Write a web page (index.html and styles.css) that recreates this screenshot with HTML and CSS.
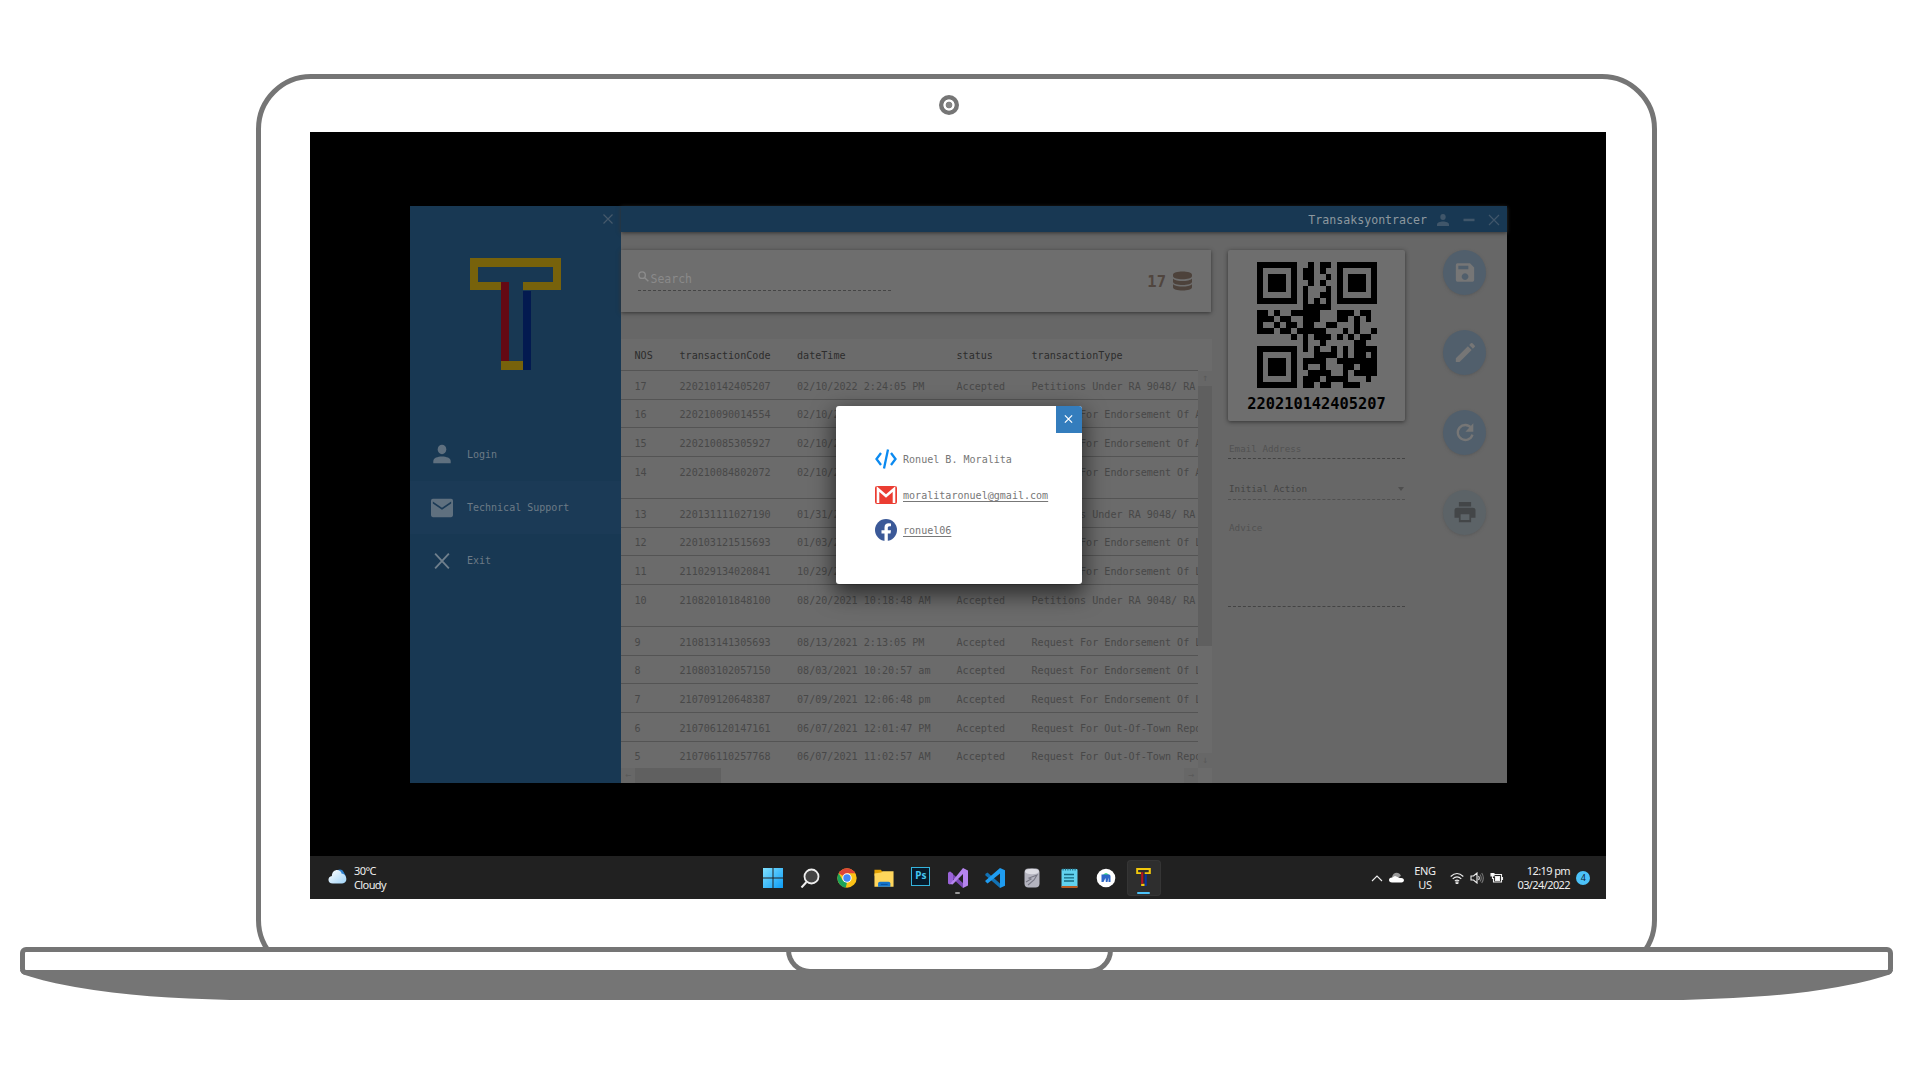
FILE: index.html
```html
<!DOCTYPE html>
<html lang="en">
<head>
<meta charset="utf-8">
<title>Transaksyontracer</title>
<link rel="stylesheet" href="styles.css">
</head>
<body>
<div class="laptop">
  <div class="lid">
    <div class="camera"></div>
    <div class="screen">
      <div class="desktop">
        <div class="app">
          <aside class="sidebar">
            <svg class="side-close" viewBox="0 0 10 10"><path d="M.5.5l9 9M9.5.5l-9 9"/></svg>
            <svg class="logo" viewBox="0 0 91 112">
              <path fill="#77620b" fill-rule="evenodd" d="M0 0h91v32H53v-8h30V9H8v15h23v8H0zM31 103h22v9H31z"/>
              <path fill="#640914" d="M31 24h8v79h-8z"/><path fill="#031a50" d="M53 33h8v79h-8z"/>
            </svg>
            <nav class="menu">
              <a class="menu-item"><svg viewBox="0 0 24 24"><ellipse cx="12" cy="7" rx="4.7" ry="5.2"/><path d="M2.5 22v-2.5c0-6.5 19-6.5 19 0V22z"/></svg>Login</a>
              <a class="menu-item active"><svg viewBox="0 0 24 24"><path fill-rule="evenodd" d="M2 2h20q2 0 2 2v16q0 2-2 2H2q-2 0-2-2V4q0-2 2-2zm0 3v2l10 7 10-7V5l-10 6.6z"/></svg>Technical Support</a>
              <a class="menu-item"><svg viewBox="0 0 24 24"><path class="stroke" d="M4.500 4l15 16M19.500 4l-15 16"/></svg>Exit</a>
            </nav>
          </aside>
          <section class="main">
            <header class="titlebar">
              <span>Transaksyontracer</span>
              <svg viewBox="0 0 12 12"><ellipse cx="6" cy="3" rx="2.700" ry="3"/><path d="M0 12v-1.500c0-4 12-4 12 0V12z"/></svg>
              <svg viewBox="0 0 12 12"><path d="M.5 4.700h11v2.500H.5z"/></svg>
              <svg viewBox="0 0 12 12"><path class="thin" d="M1 1l10 10M11 1L1 11"/></svg>
            </header>
            <div class="content">
              <div class="left">
                <div class="search-card">
                  <div class="search"><svg viewBox="0 0 12 12"><circle cx="4.500" cy="4.500" r="3.500"/><path d="M7 7l4.300 4.300"/></svg><span>Search</span></div>
                  <div class="count">17<svg viewBox="0 0 20 20"><path d="M0 3.500C0-1 20-1 20 3.500v1.300c0 4.500-20 4.500-20 0zM0 7.500c3 3.200 17 3.200 20 0v3.300c0 4.500-20 4.500-20 0zM0 13.500c3 3.200 17 3.200 20 0v3c0 4.500-20 4.500-20 0z"/></svg></div>
                </div>
                <div class="table">
                  <div class="row head"><span>NOS</span><span>transactionCode</span><span>dateTime</span><span>status</span><span>transactionType</span></div>
                  <div class="body">
                    <div class="rows">
                      <div class="row"><span>17</span><span>220210142405207</span><span>02/10/2022 2:24:05 PM</span><span>Accepted</span><span>Petitions Under RA 9048/ RA</span></div>
                      <div class="row"><span>16</span><span>220210090014554</span><span>02/10/2022 9:00:14 AM</span><span>Accepted</span><span>Request For Endorsement Of A</span></div>
                      <div class="row"><span>15</span><span>220210085305927</span><span>02/10/2022 8:53:05 AM</span><span>Accepted</span><span>Request For Endorsement Of A</span></div>
                      <div class="row tall"><span>14</span><span>220210084802072</span><span>02/10/2022 8:48:02 AM</span><span>Accepted</span><span>Request For Endorsement Of A</span></div>
                      <div class="row"><span>13</span><span>220131111027190</span><span>01/31/2022 11:10:27 AM</span><span>Accepted</span><span>Petitions Under RA 9048/ RA</span></div>
                      <div class="row"><span>12</span><span>220103121515693</span><span>01/03/2022 12:15:15 PM</span><span>Accepted</span><span>Request For Endorsement Of L</span></div>
                      <div class="row"><span>11</span><span>211029134020841</span><span>10/29/2021 1:40:20 PM</span><span>Accepted</span><span>Request For Endorsement Of L</span></div>
                      <div class="row tall"><span>10</span><span>210820101848100</span><span>08/20/2021 10:18:48 AM</span><span>Accepted</span><span>Petitions Under RA 9048/ RA</span></div>
                      <div class="row"><span>9</span><span>210813141305693</span><span>08/13/2021 2:13:05 PM</span><span>Accepted</span><span>Request For Endorsement Of L</span></div>
                      <div class="row"><span>8</span><span>210803102057150</span><span>08/03/2021 10:20:57 am</span><span>Accepted</span><span>Request For Endorsement Of L</span></div>
                      <div class="row"><span>7</span><span>210709120648387</span><span>07/09/2021 12:06:48 pm</span><span>Accepted</span><span>Request For Endorsement Of L</span></div>
                      <div class="row"><span>6</span><span>210706120147161</span><span>06/07/2021 12:01:47 PM</span><span>Accepted</span><span>Request For Out-Of-Town Repo</span></div>
                      <div class="row last"><span>5</span><span>210706110257768</span><span>06/07/2021 11:02:57 AM</span><span>Accepted</span><span>Request For Out-Of-Town Repo</span></div>
                    </div>
                    <div class="vbar"><i>↑</i><b></b><i>↓</i></div>
                  </div>
                  <div class="hbar"><i>←</i><b></b><i>→</i></div>
                </div>
              </div>
              <div class="detail">
                <div class="qr-card">
                  <svg id="qr" viewBox="0 0 21 21" preserveAspectRatio="none" shape-rendering="crispEdges"><path/></svg>
                  <strong>220210142405207</strong>
                </div>
                <div class="field email">Email Address</div>
                <div class="field action">Initial Action<i></i></div>
                <div class="field advice">Advice</div>
              </div>
              <div class="actions">
                <button><svg viewBox="0 0 24 24"><path fill-rule="evenodd" d="M4 1h14l5 5v15q0 2-2 2H3q-2 0-2-2V3q0-2 2-2zm0 3v4h12V4zm8 9a4 4 0 1 0 .1 0z"/></svg></button>
                <button><svg viewBox="0 0 24 24"><path d="M1 19L15.500 4.500l4.500 4.500L5.500 23.500H1zM17 3l2-2q1-1 2 0l2.500 2.500q1 1 0 2L21.500 7.500z"/></svg></button>
                <button><svg viewBox="0 0 24 24"><path class="ring" d="M19.500 6.500A9 9 0 1 0 21 14.500"/><path d="M22 1v10H12.500z"/></svg></button>
                <button class="print"><svg viewBox="0 0 24 24"><path fill-rule="evenodd" d="M5 0h14v5H5zM3 6.500h18q3 0 3 3V18h-5v5H5v-5H0V9.500q0-3 3-3zM7 14v6.500h10V14z"/></svg></button>
              </div>
            </div>
          </section>
          <div class="dialog">
            <div class="dialog-close"><svg viewBox="0 0 10 10"><path d="M1 1l8 8M9 1L1 9"/></svg></div>
            <ul>
              <li><svg viewBox="0 0 22 20"><path fill="none" stroke="#0b8af0" stroke-width="2.300" d="M6 4L1.500 10 6 16M16 4l4.500 6-4.500 6M13 .5L9 19.500"/></svg>Ronuel B. Moralita</li>
              <li><svg viewBox="0 0 22 20"><rect y="1" width="22" height="18" rx="2" fill="#eb3d32"/><path fill="none" stroke="#fff" stroke-width="2.600" d="M3 18V4l8 7 8-7v14"/></svg><u>moralitaronuel@gmail.com</u></li>
              <li><svg class="fb" viewBox="0 0 22 22"><circle cx="11" cy="11" r="11" fill="#3b5998"/><path fill="#fff" d="M9.500 22v-7.500H6.500v-3.300h3V8.500c0-3 1.700-4.300 4.200-4.300l2.300.2v2.900h-1.500c-1.300 0-1.700.7-1.700 1.700v2.200h3.200l-.5 3.300h-2.700V22z"/></svg><u>ronuel06</u></li>
            </ul>
          </div>
        </div>
      </div>
      <footer class="taskbar">
        <div class="weather">
          <svg viewBox="0 0 20 16"><defs><linearGradient id="cl" x2="1" y2="1"><stop stop-color="#fff"/><stop offset="1" stop-color="#9fd3f7"/></linearGradient></defs><path fill="#2f82d0" d="M10 1q5-2 7 3l2 4-6 1z"/><path fill="url(#cl)" d="M5 15.500C-1 15.500-1 8 4 7.500 4 0 13-1 14.500 5c6 0 7 10.500.5 10.500z"/></svg>
          <div>30°C<br>Cloudy</div>
        </div>
        <div class="apps">
          <span><svg viewBox="0 0 20 20"><defs><linearGradient id="w" x2="1" y2="1"><stop stop-color="#7fe0ff"/><stop offset="1" stop-color="#0c9cf5"/></linearGradient></defs><path fill="url(#w)" d="M0 0h9.500v9.500H0zM10.500 0H20v9.500h-9.500zM0 10.500h9.500V20H0zM10.500 10.500H20V20h-9.500z"/></svg></span>
          <span><svg viewBox="0 0 20 20"><circle cx="11.500" cy="8.500" r="7" fill="#444" stroke="#eee" stroke-width="1.800"/><path stroke="#eee" stroke-width="2" d="M6.500 14L1.500 19.500"/></svg></span>
          <span><svg viewBox="0 0 20 20"><circle cx="10" cy="10" r="9.700" fill="#fbc116"/><path fill="#dd4437" d="M10 10L1.600 5.200A9.700 9.700 0 0 1 18.400 5.200H10z"/><path fill="#1ba259" d="M1.600 5.200L6 12.700 10 14.500l-1.200 5.100A9.700 9.700 0 0 1 1.600 5.200z"/><circle cx="10" cy="10" r="4.700" fill="#fff"/><circle cx="10" cy="10" r="3.700" fill="#4286f5"/></svg></span>
          <span><svg viewBox="0 0 22 20"><path fill="#e3a000" d="M.5 1h7l2 2.500v4h-9z"/><path fill="#ffd65c" d="M.5 5L8 4l1.500-1.500h12V19.500H.5z"/><path fill="#1475cc" d="M4.500 19.500V16q0-2 2-2H16q2 0 2 2v3.500z"/><path fill="#0a55a0" d="M7.500 16.500h7.500v1.200H7.500z"/></svg></span>
          <span class="ps"><b>Ps</b></span>
          <span class="run"><svg viewBox="0 0 20 20"><path fill="#7b4bb5" d="M0 5l2-1.500L15 15v5L4.500 10.500 2 16.500 0 15z"/><path fill="#9a63d8" d="M2 3.500l3 2.300v8.500l-3 2.200-2-1V5z"/><path fill="#b584ee" d="M15 0l5 2.500v15L15 20V6L4.500 16.500 2 16z"/></svg></span>
          <span><svg viewBox="0 0 20 20"><path fill="#1272b5" d="M1 5.500l1.500-1L15 15.500V20L0 7z"/><path fill="#1f9cf0" d="M15 0l5 2.300v15.400L15 20V5.500L2.500 15.500 0 13z"/></svg></span>
          <span><svg viewBox="0 0 20 20"><rect x="2.500" y=".5" width="15" height="19" rx="4" fill="#b4b4bf"/><ellipse cx="10" cy="3.500" rx="7" ry="2.800" fill="#dcdce3"/><path fill="none" stroke="#777784" stroke-width="1.100" d="M4 14l5-3-2-1 8-3-3 5-6 5"/></svg></span>
          <span><svg viewBox="0 0 20 20"><rect x="2.500" y="1" width="16" height="18.500" rx="1" fill="#62d2ee"/><path fill="#b85b22" d="M2.500 18h16v2h-16z"/><path stroke="#15687f" stroke-width="1.300" d="M5 6.500h10M5 9.800h10M5 13h10"/><path stroke="#236e85" stroke-width="2" stroke-dasharray="1.200 1.200" d="M3.500 1.500h14"/></svg></span>
          <span><svg viewBox="0 0 20 20"><circle cx="10" cy="10" r="9.300" fill="#fff"/><path fill="#3ddc84" d="M6.500 7.500q3.500-5 7 0z"/><path fill="#2d67c8" d="M5.500 6.500h7.500q1.500 0 1.500 2V14h-2V9.500L11.500 14h-1.700L9.500 10l-2 4h-2z"/></svg></span>
          <span class="current"><svg viewBox="0 0 91 112"><path fill="#f2c80c" fill-rule="evenodd" d="M0 0h91v38H53V26h25V12H12v14h19v12H0zM31 98h22v14H31z"/><path fill="#b61220" d="M31 26h13v72H31z"/><path fill="#0735a0" d="M53 38h13v74H53z"/></svg></span>
        </div>
        <div class="tray">
          <svg class="chev" viewBox="0 0 12 8"><path d="M1 7l5-5 5 5"/></svg>
          <svg class="cloud" viewBox="0 0 15 11"><path fill="#999" d="M3 5C4 0 10-1 12 4l-6 3z"/><path fill="#fff" d="M3 10.500C-1 10.500-1 5.500 3 5.500L6 4l5 2c5-1 5 4.500 1.500 4.500z"/></svg>
          <div class="lang">ENG<br>US</div>
          <svg class="wifi" viewBox="0 0 14 12"><path d="M.7 4.500q6.300-6 12.600 0M2.700 6.900q4.300-4.200 8.600 0M4.800 9.200q2.200-2 4.400 0"/><circle cx="7" cy="10.700" r="1"/></svg>
          <svg class="vol" viewBox="0 0 14 12"><path d="M1 4h2.500L7 1v10L3.500 8H1zM8.500 4q1.500 2 0 4"/><path stroke="#777" d="M10 2.500q2.500 3.500 0 7M11.700 1q3.300 5 0 10"/></svg>
          <svg class="bat" viewBox="0 0 14 12"><path d="M4 2.500h7.500v7.500h-8V6"/><path fill="#fff" d="M5.500 4.500h4v4h-4zM12.500 5v3M1 1v3h3V1M2.500 4v3"/></svg>
          <div class="clock">12:19 pm<br>03/24/2022</div>
          <div class="badge">4</div>
        </div>
      </footer>
    </div>
  </div>
  <div class="base"><div class="notch"></div></div>
  <svg class="underside" viewBox="0 0 1873 30"><path d="M0 0H1873Q1872 4 1868 5C1853 10 1835 14 1818 17C1768 26 1720 28 1663 30H210C153 28 105 26 55 17C38 14 20 10 5 5Q1 4 0 0z"/></svg>
</div>
<script src="qr.js"></script>
</body>
</html>
```

FILE: styles.css
```css
* { box-sizing: border-box; }
body { margin: 0; width: 1920px; height: 1080px; overflow: hidden; background: #fff; font-family: "DejaVu Sans Mono", "Liberation Mono", monospace; }
svg { display: block; flex: none; }
.laptop { display: flex; flex-direction: column; padding: 74px 0 0 20px; }
.lid { width: 1401px; height: 901px; margin-left: 236px; border: 5px solid #757575; border-radius: 55px; display: flex; flex-direction: column; align-items: flex-start; padding: 16px 0 0 49px; flex: none; }
.camera { width: 20px; height: 20px; margin: 0 0 17px 629px; border-radius: 50%; background: radial-gradient(circle, #858585 0 3px, #fff 3.700px 5.200px, #757575 6px); flex: none; }
.screen { width: 1296px; height: 767px; flex: none; background: #000; display: flex; flex-direction: column; }
.desktop { height: 724px; padding: 74px 0 0 100px; }
.app { position: relative; width: 1097px; height: 577px; display: flex; background: #676767; }

.sidebar { width: 211px; background: #183853; display: flex; flex-direction: column; flex: none; color: #6c7a86; }
.side-close { width: 10px; height: 10px; margin: 8px 0 0 193px; fill: none; stroke: #45596b; stroke-width: 1.200; }
.logo { width: 91px; height: 112px; margin: 34px 0 0 60px; }
.menu { margin-top: 57.500px; }
.menu-item { height: 53.400px; display: flex; align-items: center; gap: 14px; padding-left: 21px; font-size: 10px; }
.menu-item.active { background: #1b3a56; }
.menu-item svg { width: 22px; height: 22px; fill: #5f707f; }
.menu-item .stroke { fill: none; stroke: #6f7f8c; stroke-width: 2; }

.main { flex: 1; display: flex; flex-direction: column; min-width: 0; }
.titlebar { position: relative; height: 26px; flex: none; background: #183853; display: flex; align-items: center; justify-content: flex-end; gap: 13.500px; padding: 1px 7px 0 0; box-shadow: 0 1px 4px #333; color: #8d989f; font-size: 11.600px; }
.titlebar svg { width: 12px; height: 12px; fill: #40566a; }
.titlebar span { margin-right: -3.500px; }
.titlebar .thin { fill: none; stroke: #40566a; stroke-width: 1.200; }
.content { flex: 1; display: flex; min-height: 0; }
.left { width: 591px; display: flex; flex-direction: column; padding-top: 18px; }
.search-card { width: 590px; height: 62px; flex: none; background: #6e6e6e; box-shadow: 0 1px 4px #333; display: flex; justify-content: space-between; align-items: flex-start; padding: 19px 19px 0 17px; }
.search { width: 253px; height: 22px; display: flex; gap: 1.500px; border-bottom: 1px dashed #454545; font-size: 11.500px; color: #8a8a8a; line-height: 21px; }
.search svg { width: 11px; height: 11px; margin-top: 2px; fill: none; stroke: #8c8c8c; stroke-width: 1.500; }
.count { display: flex; gap: 7px; font-size: 15.500px; font-weight: 700; line-height: 27px; color: #50453e; }
.count svg { width: 19px; height: 20px; margin-top: 2px; fill: #4d423b; }

.table { margin-top: 27px; flex: 1; display: flex; flex-direction: column; min-height: 0; background: #6b6b6b; font-size: 10.080px; color: #484848; }
.row { display: grid; grid-template-columns: 45px 117.500px 159.500px 75px 1fr; height: 28.670px; padding: 8.600px 0 0 13.500px; border-bottom: 1px solid #545454; line-height: 14px; white-space: nowrap; overflow: hidden; }
.row.tall { height: 42.100px; }
.row.head { height: 32px; flex: none; margin-right: 14px; color: #2d2d2d; padding-top: 10px; }
.row.last { border: 0; }
.body { flex: 1; display: flex; min-height: 0; }
.rows { flex: 1; min-width: 0; overflow: hidden; }
.vbar { width: 14px; display: flex; flex-direction: column; }
.vbar b { height: 260px; background: #5f5f5f; margin-bottom: auto; }
.table i { font-style: normal; color: #595959; background: #676767; width: 14px; height: 15px; line-height: 14px; text-align: center; font-size: 10px; }
.hbar { height: 15px; display: flex; padding-right: 14px; flex: none; }
.hbar b { width: 86px; background: #606060; margin-right: auto; }

.detail { width: 177px; margin: 18px 0 0 16px; display: flex; flex-direction: column; }
.qr-card { height: 171px; background: #6e6e6e; box-shadow: 0 1px 4px #333; display: flex; flex-direction: column; align-items: center; padding-top: 12px; border-radius: 2px; color: #000; }
#qr { width: 120px; height: 126px; margin-right: -1px; }
.qr-card strong { font-size: 15.350px; line-height: 32px; }
.field { position: relative; border-bottom: 1px dashed #434343; font-size: 9.250px; line-height: 14px; color: #515151; padding-left: 1px; }
.email { height: 38px; padding-top: 20.500px; }
.action { height: 41px; padding-top: 23px; color: #444; border-color: #505050; display: flex; justify-content: space-between; }
.action i { border: 3px solid transparent; border-top: 4px solid #4e4e4e; margin: 4.500px 1px 0; height: 0; }
.advice { height: 107px; padding-top: 20.500px; }
.actions { margin: 18px 0 0 38px; display: flex; flex-direction: column; gap: 35px; }
.actions button { width: 43px; height: 45px; border: 0; border-radius: 50%; padding: 0; background: #515f6c; display: flex; align-items: center; justify-content: center; box-shadow: 0 1px 3px #5a5a5a; }
.actions svg { width: 20px; height: 21px; fill: #767676; }
.actions .ring { fill: none; stroke: #767676; stroke-width: 2.800; }
.actions .print { background: #5c6367; }
.actions .print svg { fill: #434648; width: 22px; }

.dialog { position: absolute; left: 425.500px; top: 200px; width: 246px; height: 178px; background: #fff; border-radius: 3px; box-shadow: 0 8px 22px 2px rgba(0,0,0,.6); display: flex; flex-direction: column; }
.dialog-close { align-self: flex-end; width: 25.500px; height: 26.500px; background: #347dbd; border-radius: 0 3px 0 0; display: flex; align-items: center; justify-content: center; }
.dialog-close svg { width: 9px; height: 10px; fill: none; stroke: #fff; stroke-width: 1.400; }
.dialog ul { margin: 9px 0 0 39.500px; padding: 0; list-style: none; font-size: 10.050px; color: #777; }
.dialog li { height: 35.600px; display: flex; align-items: center; gap: 6px; white-space: nowrap; }
.dialog li svg { width: 22px; height: 20px; }
.dialog li .fb { height: 22px; }
.dialog u { text-underline-offset: 2px; padding-top: 1px; }

.taskbar { height: 43px; background: #212121; color: #eee; display: grid; grid-template-columns: 434px 1fr 254px; align-items: center; font: 11px/14px "Noto Sans", "Open Sans", sans-serif; flex: none; }
.weather { display: flex; align-items: center; gap: 7px; padding-left: 18px; letter-spacing: -.6px; }
.weather svg { width: 19px; height: 15px; margin-top: -3px; }
.apps { display: flex; padding-left: 10px; }
.apps span { width: 37.100px; height: 36px; display: flex; align-items: center; justify-content: center; flex: none; position: relative; }
.apps svg { width: 20px; height: 20px; }
.ps b { width: 19px; height: 19px; border: 1.500px solid #35b4dd; background: #071a2a; color: #45c5f0; font-size: 10px; line-height: 15px; text-align: center; margin-bottom: 2px; }
.apps .run::after { content: ""; position: absolute; left: 16px; top: 32px; width: 5px; height: 2px; border-radius: 1px; background: #999; }
.apps .current { width: 34px; margin-left: 2px; background: #2e2e2e; border-radius: 4px; box-shadow: inset 0 0 0 1px #353535; }
.apps .current svg { width: 15px; height: 18px; margin-bottom: 1px; }
.apps .current::after { content: ""; position: absolute; left: 10.500px; bottom: 1.500px; width: 13px; height: 2.500px; border-radius: 1px; background: #4cc2f8; }
.tray { display: grid; grid-template-columns: 12px 15px 30px 14px 14px 14px 60px 14px; column-gap: 6px; align-items: center; padding-left: 19px; letter-spacing: -.6px; }
.tray svg { fill: none; stroke: #eee; stroke-width: 1.100; }
.tray .cloud { stroke: none; }
.tray .lang { text-align: center; letter-spacing: -.3px; }
.tray .wifi, .tray .vol, .tray .bat { position: relative; left: 4px; }
.tray .clock { text-align: right; margin-right: -4px; white-space: nowrap; }
.badge { width: 14px; height: 14px; margin-left: 4px; border-radius: 50%; background: #4cc2f8; color: #123; text-align: center; font-size: 9px; }

.base { position: relative; width: 1873px; height: 28px; margin-top: -28px; flex: none; border: 5px solid #757575; border-radius: 6px; background: #fff; }
.notch { width: 327px; height: 26px; margin: -4px 0 0 761px; border: 5px solid #757575; border-top: 0; border-radius: 0 0 24px 24px; }
.underside { width: 1873px; height: 30px; margin-top: -5px; position: relative; fill: #757575; }
```

FILE: qr.js
```js
const modules = [
  "111111100101101111111",
  "100000101101001000001",
  "101110101100101011101",
  "101110100101001011101",
  "101110101000101011101",
  "100000101001101000001",
  "111111101010101111111",
  "000000001111100000000",
  "110100111110001110110",
  "111011001110001101010",
  "100101101100110001000",
  "111011011111000101001",
  "000000101011101010110",
  "000000001001000001100",
  "111111101010010101111",
  "100000100011110101101",
  "101110101111001111111",
  "101110101001000110111",
  "101110100111100101111",
  "100000101110111100010",
  "111111101101100111000"
];
let d = "";
modules.forEach((row, y) => [...row].forEach((bit, x) => {
  if (bit === "1") d += `M${x} ${y}h1v1h-1z`;
}));
document.querySelector("#qr path").setAttribute("d", d);
```
